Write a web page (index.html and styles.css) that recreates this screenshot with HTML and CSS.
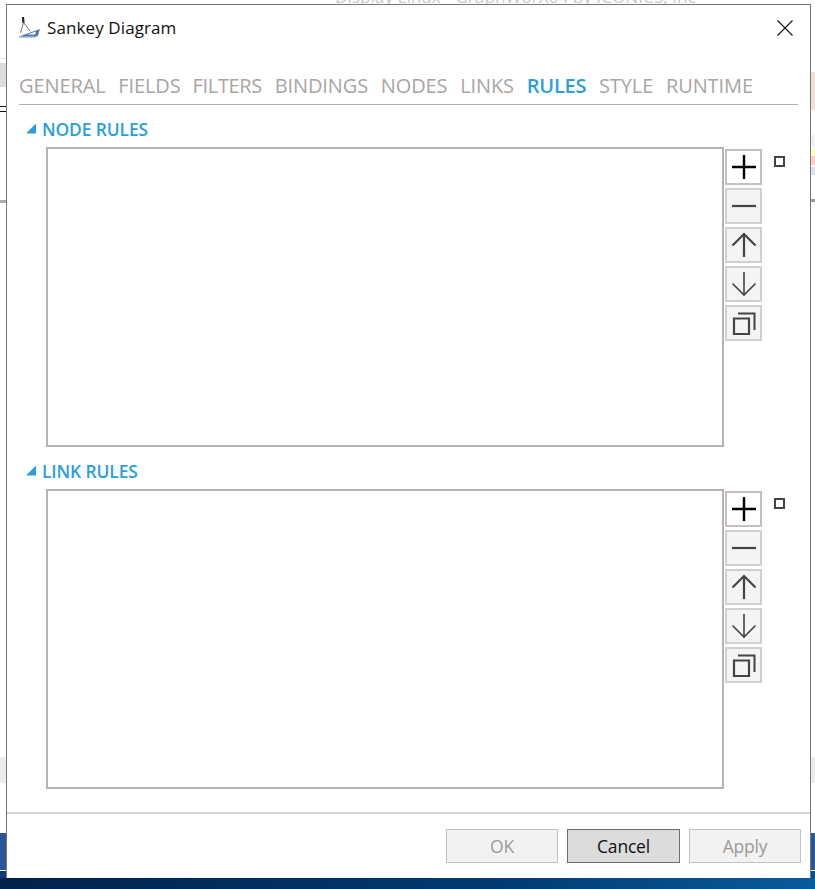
FILE: index.html
```html
<!DOCTYPE html>
<html lang="en">
<head>
<meta charset="utf-8">
<title>Sankey Diagram</title>
<link rel="stylesheet" href="styles.css">
</head>
<body>
<div class="behind-title"><span>Display Linux - GraphWorX64 by ICONICS, Inc</span></div>
<div class="dialog">
  <header class="titlebar">
    <svg class="app-icon" width="22" height="22" viewBox="0 0 22 22">
      <path d="M1 19.500 L22 12 L19.500 19.500 Z" fill="#4a74b8"/>
      <path d="M9 17.500 L18 14.500 L17 17.500 Z" fill="#fff"/>
      <path d="M5 0 L5.500 6" stroke="#222" stroke-width="2.200" fill="none"/>
      <path d="M5.500 5.500 L12 14 M5.500 5.500 L2.500 16" stroke="#777" stroke-width="1" fill="none"/>
      <path d="M1 20 H18" stroke="#7f93b5" stroke-width="1"/>
    </svg>
    <span class="title-text">Sankey Diagram</span>
    <svg class="close" width="16" height="16" viewBox="0 0 16 16"><path d="M0.500 0.500 L15.500 15.500 M15.500 0.500 L0.500 15.500" stroke="#111" stroke-width="1.100" fill="none"/></svg>
  </header>
  <nav class="tabs">
    <span class="tab">GENERAL</span>
    <span class="tab">FIELDS</span>
    <span class="tab tight">FILTERS</span>
    <span class="tab">BINDINGS</span>
    <span class="tab">NODES</span>
    <span class="tab">LINKS</span>
    <span class="tab active">RULES</span>
    <span class="tab">STYLE</span>
    <span class="tab">RUNTIME</span>
  </nav>
  <section class="rules">
    <h2 class="rules-head"><i class="tri"></i>NODE RULES</h2>
    <div class="rules-body">
      <div class="listbox"></div>
      <div class="tools">
        <button class="tool primary" type="button"><svg width="26" height="26" viewBox="0 0 26 26"><path d="M1 13 H25 M13 1 V25" stroke="#000" stroke-width="2.400" fill="none"/></svg></button>
        <button class="tool" type="button"><svg width="26" height="26" viewBox="0 0 26 26"><path d="M1 13 H25" stroke="#444" stroke-width="2.200" fill="none"/></svg></button>
        <button class="tool" type="button"><svg width="26" height="26" viewBox="0 0 26 26"><path d="M13 25 V2 M1.500 13.500 L13 2 L24.500 13.500" stroke="#444" stroke-width="2.200" fill="none"/></svg></button>
        <button class="tool" type="button"><svg width="26" height="26" viewBox="0 0 26 26"><path d="M13 1 V24 M1.500 12.500 L13 24 L24.500 12.500" stroke="#444" stroke-width="1.600" fill="none"/></svg></button>
        <button class="tool" type="button"><svg width="26" height="26" viewBox="0 0 26 26"><path d="M3 8.500 H18 V24 H3 Z" stroke="#444" stroke-width="2.200" fill="none"/><path d="M7 3.500 H23.500 V20" stroke="#444" stroke-width="2" fill="none"/></svg></button>
      </div>
      <i class="marker"></i>
    </div>
  </section>
  <section class="rules">
    <h2 class="rules-head"><i class="tri"></i>LINK RULES</h2>
    <div class="rules-body">
      <div class="listbox"></div>
      <div class="tools">
        <button class="tool primary" type="button"><svg width="26" height="26" viewBox="0 0 26 26"><path d="M1 13 H25 M13 1 V25" stroke="#000" stroke-width="2.400" fill="none"/></svg></button>
        <button class="tool" type="button"><svg width="26" height="26" viewBox="0 0 26 26"><path d="M1 13 H25" stroke="#444" stroke-width="2.200" fill="none"/></svg></button>
        <button class="tool" type="button"><svg width="26" height="26" viewBox="0 0 26 26"><path d="M13 25 V2 M1.500 13.500 L13 2 L24.500 13.500" stroke="#444" stroke-width="2.200" fill="none"/></svg></button>
        <button class="tool" type="button"><svg width="26" height="26" viewBox="0 0 26 26"><path d="M13 1 V24 M1.500 12.500 L13 24 L24.500 12.500" stroke="#444" stroke-width="1.600" fill="none"/></svg></button>
        <button class="tool" type="button"><svg width="26" height="26" viewBox="0 0 26 26"><path d="M3 8.500 H18 V24 H3 Z" stroke="#444" stroke-width="2.200" fill="none"/><path d="M7 3.500 H23.500 V20" stroke="#444" stroke-width="2" fill="none"/></svg></button>
      </div>
      <i class="marker"></i>
    </div>
  </section>
  <footer class="footer">
    <button class="btn disabled" type="button">OK</button>
    <button class="btn focus" type="button">Cancel</button>
    <button class="btn disabled" type="button">Apply</button>
  </footer>
</div>
</body>
</html>
```
FILE: styles.css
```css
* { box-sizing: border-box; }
html, body { height: 100%; }
body {
  margin: 0;
  overflow: hidden;
  font-family: "Open Sans", "Noto Sans", sans-serif;
  background-color: #fff;
  background-repeat: no-repeat;
  background-image:
    linear-gradient(90deg, #02214a 0, #013a70 60%, #0a5a9a 100%),
    linear-gradient(#0c3a78, #0c3a78),
    linear-gradient(#0c4a8a, #0c4a8a),
    linear-gradient(#2a5599, #2a5599),
    linear-gradient(#2a5599, #2a5599),
    linear-gradient(#ececec, #ececec),
    linear-gradient(#ececec, #ececec),
    linear-gradient(#aaa, #aaa),
    linear-gradient(#999, #999),
    linear-gradient(#111, #111),
    linear-gradient(#111, #111),
    linear-gradient(#ddd, #ddd),
    linear-gradient(#e2e2e2, #e2e2e2),
    linear-gradient(#e0e0ea, #e0e0ea),
    linear-gradient(#fcc, #fcc),
    linear-gradient(#ffffc8, #ffffc8),
    linear-gradient(#f2f2f2, #f2f2f2),
    linear-gradient(#eee0d8, #eee0d8);
  background-size:
    100% 11px,
    7px 7px,
    5px 7px,
    7px 37px,
    5px 37px,
    7px 26px,
    5px 26px,
    7px 3px,
    5px 3px,
    7px 1px,
    7px 1px,
    7px 24px,
    7px 1px,
    5px 8px,
    5px 9px,
    5px 7px,
    5px 12px,
    5px 38px;
  background-position:
    0 878px,
    0 871px,
    810px 871px,
    0 833px,
    810px 833px,
    0 757px,
    810px 757px,
    0 200px,
    810px 199px,
    0 106px,
    0 111px,
    0 63px,
    0 58px,
    810px 167px,
    810px 156px,
    810px 148px,
    810px 135px,
    810px 72px;
}
.behind-title {
  height: 4px;
  overflow: hidden;
  padding-left: 335px;
  color: #c9c9c9;
  font-size: 17.2px;
  line-height: 14px;
  white-space: nowrap;
}
.behind-title span { display: block; margin-top: -10px; }

.dialog {
  margin-left: 6px;
  width: 805px;
  height: 874px;
  background: #fff;
  border: 1px solid #777;
  border-bottom: 0;
  display: flex;
  flex-direction: column;
}
.titlebar {
  height: 46px;
  flex: none;
  display: flex;
  align-items: center;
  padding: 0 17px 1px 11px;
}
.app-icon { flex: none; }
.title-text {
  margin-left: 7px;
  margin-bottom: 1px;
  font-size: 17px;
  letter-spacing: 0.1px;
  color: #111;
}
.close { margin-left: auto; }

.tabs {
  height: 54px;
  flex: none;
  margin: 0 12px;
  border-bottom: 1px solid #b5aeab;
  display: flex;
  gap: 12.7px;
  padding-top: 20px;
  line-height: 30px;
}
.tab { font-size: 20px; color: #aaa5a2; letter-spacing: -0.1px; white-space: nowrap; }
.tab.tight { letter-spacing: -0.35px; margin-left: -0.7px; }
.tab.active { color: #2a9fdc; font-weight: 600; letter-spacing: -0.2px; }

.rules { flex: none; }
.rules-head {
  height: 42px;
  margin: 0;
  padding: 5px 0 0 19px;
  display: flex;
  align-items: center;
  font-size: 17.4px;
  font-weight: 600;
  color: #2a9fdc;
  letter-spacing: -0.1px;
}
.tri {
  width: 10px;
  height: 10px;
  margin-right: 6px;
  background: #2a9fdc;
  clip-path: polygon(100% 0, 100% 100%, 0 100%);
}
.rules-body {
  display: flex;
  align-items: flex-start;
  padding-left: 39px;
}
.listbox {
  width: 678px;
  height: 300px;
  flex: none;
  background: #fff;
  border: 2px solid #b8b3b0;
}
.tools {
  margin-left: 1px;
  padding-top: 2px;
  display: flex;
  flex-direction: column;
  gap: 3px;
}
.tool {
  width: 37px;
  height: 36px;
  padding: 0;
  display: flex;
  align-items: center;
  justify-content: center;
  background: #f4f4f4;
  border: 2px solid #d0d0d0;
  border-radius: 0;
}
.tool.primary { background: #fff; border-color: #c4bfbc; }
.marker {
  width: 11px;
  height: 11px;
  margin: 9px 0 0 12px;
  border: 2px solid #444;
  background: #fff;
}

.footer {
  margin-top: 23px;
  flex: 1;
  border-top: 2px solid #d4d4d4;
  padding: 15px 9px 0 0;
  display: flex;
  justify-content: flex-end;
  align-items: flex-start;
  gap: 9px;
}
.btn {
  width: 112px;
  height: 34px;
  padding: 0;
  font-family: inherit;
  font-size: 17.5px;
  border-radius: 0;
  letter-spacing: -0.2px;
}
.btn.disabled { background: #f2f2f2; border: 1px solid #c2c2c2; color: #9a9a9a; }
.btn.focus { width: 113px; background: #dcdcdc; border: 1px solid #6e6e6e; color: #111; }
```
